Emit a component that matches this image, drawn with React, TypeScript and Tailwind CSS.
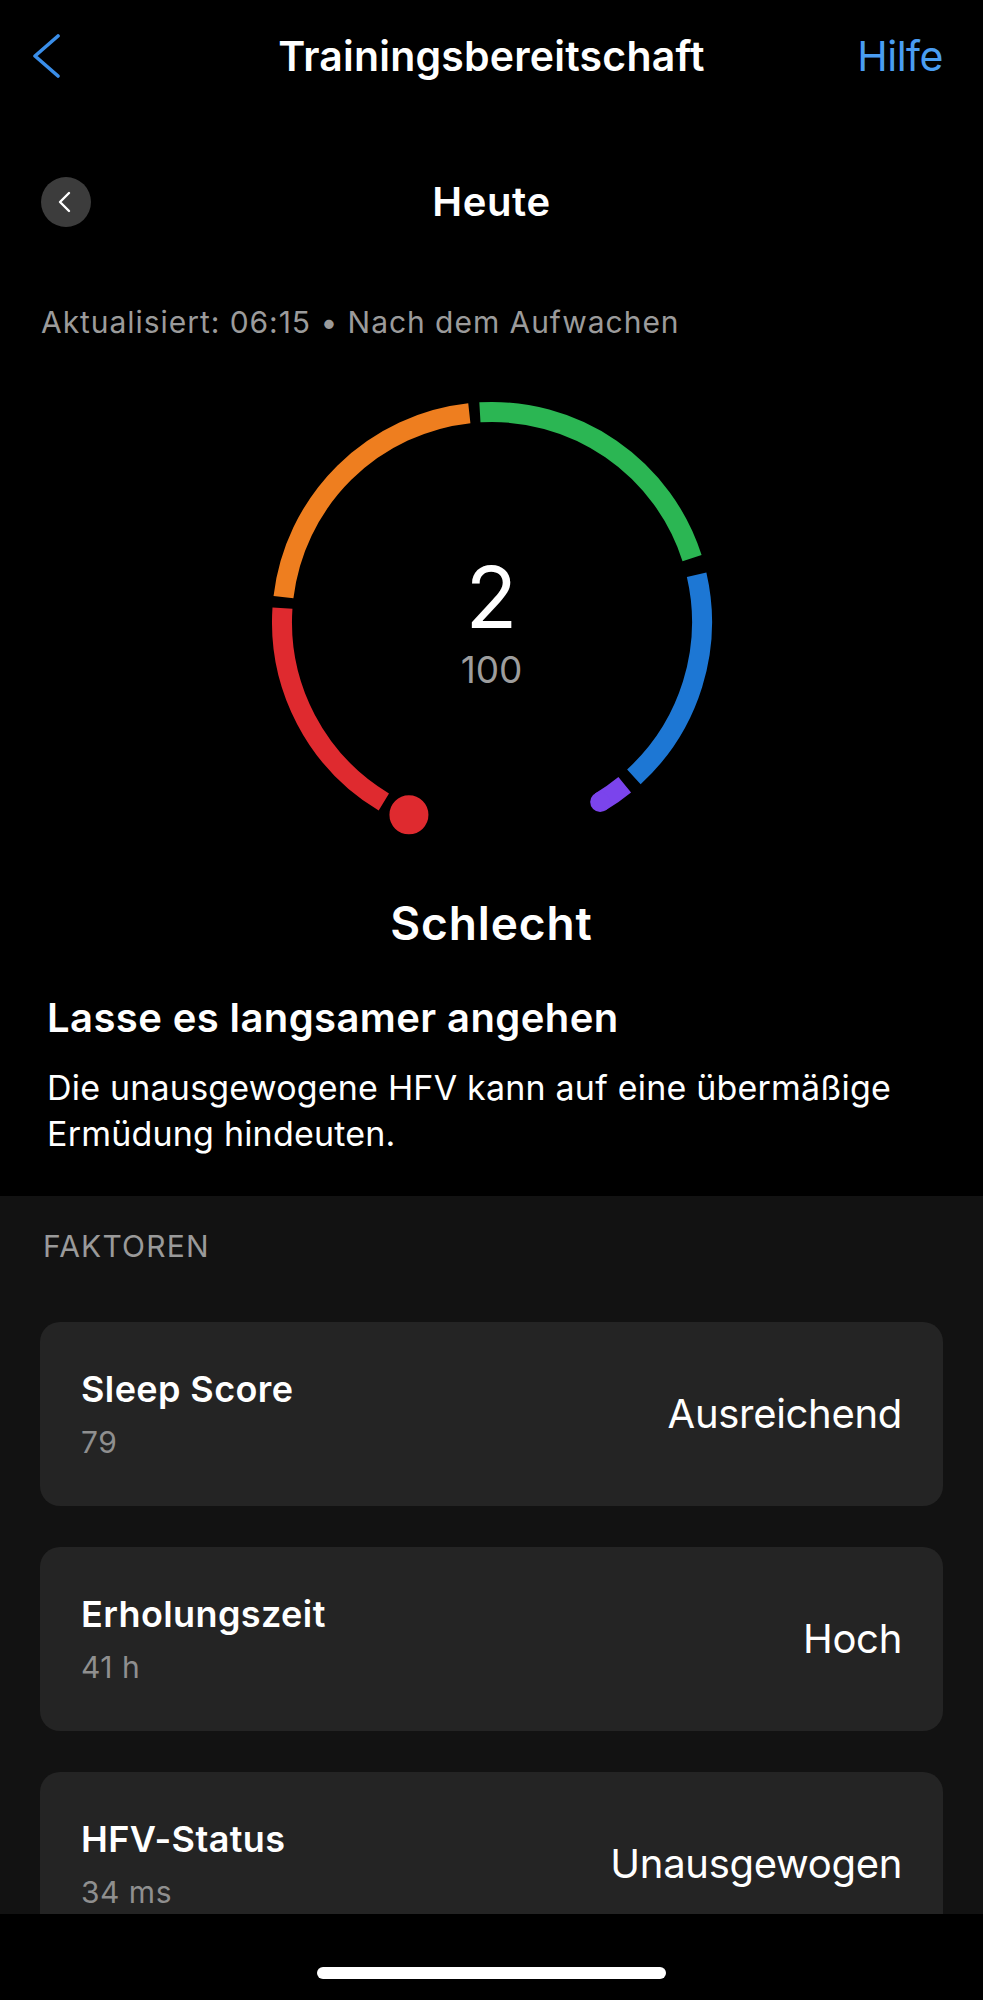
import React from "react";

const CX = 240;
const CY = 240;
const R = 210;

function pt(a: number): [number, number] {
  const r = (a * Math.PI) / 180;
  return [CX + R * Math.cos(r), CY + R * Math.sin(r)];
}

function arc(a0: number, a1: number): string {
  const [x0, y0] = pt(a0);
  const [x1, y1] = pt(a1);
  const large = a1 - a0 > 180 ? 1 : 0;
  return `M ${x0.toFixed(2)} ${y0.toFixed(2)} A ${R} ${R} 0 ${large} 1 ${x1.toFixed(2)} ${y1.toFixed(2)}`;
}

function Gauge() {
  const purpleEnd = pt(59);
  const dot = pt(113.3);
  return (
    <div className="relative mx-auto mt-[45px] h-[480px] w-[480px]">
      <svg width="480" height="480" viewBox="0 0 480 480" className="block">
        <path d={arc(121, 183.8)} stroke="#df2a2f" strokeWidth="20" fill="none" />
        <path d={arc(186.8, 263.8)} stroke="#ee7e1f" strokeWidth="20" fill="none" />
        <path d={arc(266.7, 342.3)} stroke="#2bb653" strokeWidth="20" fill="none" />
        <path d={arc(347, 407.5)} stroke="#1d77d4" strokeWidth="20" fill="none" />
        <path d={arc(50.8, 59)} stroke="#7b44ec" strokeWidth="20" fill="none" />
        <circle cx={purpleEnd[0]} cy={purpleEnd[1]} r="10" fill="#7b44ec" />
        <circle cx={dot[0]} cy={dot[1]} r="22" fill="#df2a2f" stroke="#000" strokeWidth="5" />
      </svg>
      <div className="absolute inset-0 flex flex-col items-center pt-[173px]">
        <div className="text-[85px] font-normal leading-none text-white">2</div>
        <div className="mt-[11px] text-[37px] font-normal leading-none text-[#9d9d9d]">100</div>
      </div>
    </div>
  );
}

function FactorCard({ title, sub, value }: { title: string; sub: string; value: string }) {
  return (
    <div className="flex h-[184px] shrink-0 items-center justify-between rounded-[20px] bg-[#242424] pl-[41px] pr-[41px]">
      <div className="flex flex-col">
        <div className="text-[36px] font-semibold leading-none tracking-[0.4px] text-white">{title}</div>
        <div className="mt-[20px] text-[30px] font-normal leading-none tracking-[0.5px] text-[#8f8f8f]">{sub}</div>
      </div>
      <div className="text-[40px] font-normal leading-none tracking-[-0.3px] text-white">{value}</div>
    </div>
  );
}

export default function App() {
  return (
    <div className="flex h-[2000px] w-full flex-col overflow-hidden bg-black font-['Inter',sans-serif] text-white">
      <div className="flex-1 overflow-hidden">
        {/* Nav bar */}
        <div className="grid h-[112px] grid-cols-[1fr_auto_1fr] items-center">
          <div className="pl-[32px]">
            <svg width="30" height="44" viewBox="0 0 30 44" className="block">
              <path d="M26 2 L3 22 L26 42" stroke="#3a8ee9" strokeWidth="3.6" fill="none" strokeLinecap="round" strokeLinejoin="round" />
            </svg>
          </div>
          <div className="text-[41px] font-semibold leading-none tracking-[0.2px] text-white">Trainingsbereitschaft</div>
          <div className="pr-[40px] text-right text-[41px] font-normal leading-none tracking-[-0.5px] text-[#4a9df2]">Hilfe</div>
        </div>

        {/* Day selector */}
        <div className="mt-[65px] grid h-[50px] grid-cols-[1fr_auto_1fr] items-center">
          <div className="pl-[41px]">
            <div className="flex h-[50px] w-[50px] items-center justify-center rounded-full bg-[#3c3c3c]">
              <svg width="16" height="22" viewBox="0 0 16 22" className="block -translate-x-[1px]">
                <path d="M12 2 L3 11 L12 20" stroke="#ffffff" strokeWidth="2.4" fill="none" strokeLinecap="round" strokeLinejoin="round" />
              </svg>
            </div>
          </div>
          <div className="text-[40px] font-semibold leading-none tracking-[0.6px] text-white">Heute</div>
          <div />
        </div>

        <div className="mt-[80px] pl-[41px] text-[30px] font-normal leading-none tracking-[0.95px] text-[#9b9b9b]">
          Aktualisiert: 06:15 • Nach dem Aufwachen
        </div>

        <Gauge />

        <div className="mt-[38px] text-center text-[46px] font-semibold leading-none tracking-[0.9px] text-white">Schlecht</div>

        <div className="px-[47px] pb-[39px]">
          <div className="mt-[52px] text-[40px] font-semibold leading-none tracking-[0.4px] text-white">
            Lasse es langsamer angehen
          </div>
          <div className="mt-[27px] text-[34px] font-normal leading-[46px] tracking-[0.2px] text-white">
            Die unausgewogene HFV kann auf eine übermäßige
            <br />
            Ermüdung hindeuten.
          </div>
        </div>

        {/* Factors section */}
        <div className="h-full bg-[#121212] px-[40px] pt-[35px]">
          <div className="pl-[3px] text-[30px] font-normal leading-none tracking-[1.2px] text-[#9a9a9a]">FAKTOREN</div>
          <div className="mt-[61px] flex flex-col gap-[41px]">
            <FactorCard title="Sleep Score" sub="79" value="Ausreichend" />
            <FactorCard title="Erholungszeit" sub="41 h" value="Hoch" />
            <FactorCard title="HFV-Status" sub="34 ms" value="Unausgewogen" />
          </div>
        </div>
      </div>

      {/* Home indicator bar */}
      <div className="flex h-[86px] shrink-0 justify-center bg-black pt-[53px]">
        <div className="h-[12px] w-[349px] rounded-full bg-white" />
      </div>
    </div>
  );
}
